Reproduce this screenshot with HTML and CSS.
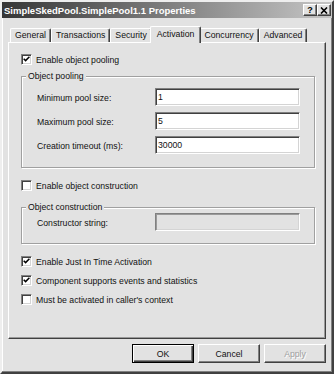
FILE: index.html
```html
<!DOCTYPE html>
<html>
<head>
    <meta charset="UTF-8">
    <title>SimpleSkedPool.SimplePool1.1 Properties</title>
    <link rel="stylesheet" href="styles.css">
</head>
<body>
    <div class="window">
        <!-- Caption -->
        <div class="titlebar">
            <span class="title">SimpleSkedPool.SimplePool1.1 Properties</span>
            <div class="caption-buttons">
                <span class="cap-btn">?</span>
                <span class="cap-btn">
                    <svg width="8" height="7" viewBox="0 0 8 7"><path d="M1 0.5 L7 6.5 M7 0.5 L1 6.5" stroke="#000" stroke-width="1.6" fill="none"/></svg>
                </span>
            </div>
        </div>

        <div class="client">
            <!-- Tabs -->
            <div class="tabs">
                <div class="tab">General</div>
                <div class="tab">Transactions</div>
                <div class="tab">Security</div>
                <div class="tab active">Activation</div>
                <div class="tab">Concurrency</div>
                <div class="tab">Advanced</div>
            </div>

            <!-- Activation page -->
            <div class="panel">
                <div class="check">
                    <span class="box"><svg width="7" height="7" viewBox="0 0 7 7"><path d="M0.7 2.7 L2.6 4.6 L6.4 0.8" stroke="#000" stroke-width="1.5" fill="none"/></svg></span>
                    Enable object pooling
                </div>

                <fieldset class="group">
                    <legend>Object pooling</legend>
                    <div class="field"><span>Minimum pool size:</span><div class="edit">1</div></div>
                    <div class="field"><span>Maximum pool size:</span><div class="edit">5</div></div>
                    <div class="field"><span>Creation timeout (ms):</span><div class="edit">30000</div></div>
                </fieldset>

                <div class="check spaced">
                    <span class="box"></span>
                    Enable object construction
                </div>

                <fieldset class="group compact">
                    <legend>Object construction</legend>
                    <div class="field"><span>Constructor string:</span><div class="edit disabled"></div></div>
                </fieldset>

                <div class="check spaced">
                    <span class="box"><svg width="7" height="7" viewBox="0 0 7 7"><path d="M0.7 2.7 L2.6 4.6 L6.4 0.8" stroke="#000" stroke-width="1.5" fill="none"/></svg></span>
                    Enable Just In Time Activation
                </div>
                <div class="check">
                    <span class="box"><svg width="7" height="7" viewBox="0 0 7 7"><path d="M0.7 2.7 L2.6 4.6 L6.4 0.8" stroke="#000" stroke-width="1.5" fill="none"/></svg></span>
                    Component supports events and statistics
                </div>
                <div class="check">
                    <span class="box"></span>
                    Must be activated in caller's context
                </div>
            </div>

            <!-- Dialog buttons -->
            <div class="buttons">
                <div class="btn default">OK</div>
                <div class="btn">Cancel</div>
                <div class="btn disabled">Apply</div>
            </div>
        </div>
    </div>
</body>
</html>
```

FILE: styles.css
```css
* { box-sizing: border-box; }
body { margin: 0; background: #fff; font-family: "Liberation Sans", Arial, sans-serif; font-size: 8.7px; color: #111; }

.window { width: 334px; height: 374px; background: #e2e2e2; border: 2px solid; border-color: #eeeeee #404040 #404040 #eeeeee; box-shadow: inset -1px -1px #808080, inset 1px 1px #fff; display: flex; flex-direction: column; }

.titlebar { height: 16px; display: flex; align-items: center; justify-content: space-between; padding: 0 1px 0 2px; background: linear-gradient(to right, #363636, #c6c6c6); color: #fff; }
.title { font-weight: bold; font-size: 9.5px; }
.caption-buttons { display: flex; }
.cap-btn { width: 14px; height: 12px; background: #e2e2e2; border: 1px solid; border-color: #fff #404040 #404040 #fff; box-shadow: inset -1px -1px #808080; display: flex; align-items: center; justify-content: center; color: #000; font-weight: bold; font-size: 9px; }

.client { flex: 1; padding: 8px 6px 0; }

.tabs { display: flex; align-items: flex-end; height: 16px; padding-left: 2px; position: relative; z-index: 1; }
.tab { height: 14px; padding: 0 4px; line-height: 13px; border: 1px solid; border-bottom: 0; border-color: #fff #404040 #fff #fff; border-radius: 2px 2px 0 0; box-shadow: inset -1px 0 #808080; }
.tab.active { position: relative; z-index: 1; height: 17px; margin: 0 -2px -1px; padding: 0 6px; line-height: 14px; background: #e2e2e2; }

.panel { height: 297px; padding: 10px 10px 0 12px; border: 1px solid; border-color: #fff #404040 #404040 #fff; box-shadow: inset -1px -1px #9a9a9a; }

.check { display: flex; align-items: center; gap: 4px; height: 13px; }
.check + .check { margin-top: 6px; }
.check.spaced { margin-top: 11px; }
.box { width: 11px; height: 11px; background: #fff; border: 1px solid; border-color: #808080 #fff #fff #808080; box-shadow: inset 1px 1px #404040, inset -1px -1px #d4d4d4; display: flex; align-items: center; justify-content: center; }

.group { margin: 5px 0 0; padding: 6px 0 13px 4px; border: 1px solid #a0a0a0; box-shadow: inset 1px 1px #fff, 1px 1px #fff; min-width: 0; }
.group.compact { margin-top: 10px; padding-top: 0; padding-bottom: 12px; }
.group legend { padding: 0 2px; line-height: 11px; background: #e2e2e2; }

.field { display: grid; grid-template-columns: 118px 145px; align-items: center; height: 18px; padding-left: 11px; }
.field + .field { margin-top: 6px; }
.field span { padding-top: 1px; }
.edit { height: 18px; padding: 0 2px; line-height: 16px; background: #fff; border: 1px solid; border-color: #808080 #fff #fff #808080; box-shadow: inset 1px 1px #404040, inset -1px -1px #d4d4d4; }
.edit.disabled { background: #e2e2e2; box-shadow: inset 1px 1px #9a9a9a, inset -1px -1px #d4d4d4; }

.buttons { display: flex; justify-content: flex-end; gap: 4px; margin-top: 5px; }
.btn { width: 62px; height: 19px; display: flex; align-items: center; justify-content: center; background: #e2e2e2; border: 1px solid; border-color: #fff #404040 #404040 #fff; box-shadow: inset -1px -1px #808080; }
.btn.default { border-color: #000; box-shadow: inset 1px 1px #fff, inset -1px -1px #404040, inset -2px -2px #808080; }
.btn.disabled { color: #a0a0a0; text-shadow: 1px 1px #fff; }
```
